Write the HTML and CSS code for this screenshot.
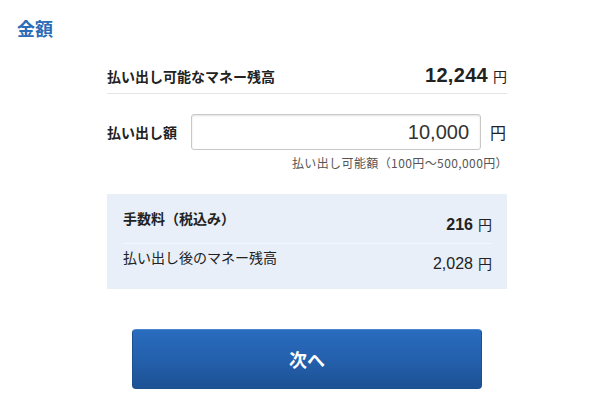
FILE: index.html
```html
<!DOCTYPE html>
<html lang="ja">
<head>
<meta charset="utf-8">
<link rel="stylesheet" href="styles.css">
</head>
<body>
<h2 class="title">金額</h2>
<div class="content">
  <div class="balance-row">
    <span class="label">払い出し可能なマネー残高</span>
    <span class="amount"><span class="num-big">12,244</span><span class="yen">円</span></span>
  </div>
  <div class="input-row">
    <label class="input-label">払い出し額</label>
    <input class="amount-input" type="text" value="10,000" readonly>
    <span class="input-yen">円</span>
  </div>
  <p class="hint">払い出し可能額（100円〜500,000円）</p>
  <div class="summary">
    <div class="sum-row fee">
      <span class="sum-label bold">手数料（税込み）</span>
      <span class="sum-value"><span class="num bold">216</span><span class="yen">円</span></span>
    </div>
    <div class="sum-row after">
      <span class="sum-label">払い出し後のマネー残高</span>
      <span class="sum-value"><span class="num">2,028</span><span class="yen">円</span></span>
    </div>
  </div>
  <button class="next-btn" type="button">次へ</button>
</div>
</body>
</html>
```
FILE: styles.css
```css
* { box-sizing: border-box; }
body {
  margin: 0;
  background: #fff;
  color: #222;
  font-family: "Liberation Sans", "Noto Sans CJK JP", sans-serif;
}
.title {
  margin: 0;
  padding: 15px 0 0 17px;
  font-size: 18px;
  line-height: 26px;
  font-weight: bold;
  color: #2a6cb8;
  font-family: "Noto Sans CJK JP", sans-serif;
}
.content {
  width: 400px;
  margin-left: 107px;
}
.balance-row {
  margin-top: 21px;
  display: flex;
  justify-content: space-between;
  align-items: baseline;
  padding-bottom: 5px;
  border-bottom: 1px solid #e4e4e4;
}
.label {
  font-family: "Noto Sans CJK JP", sans-serif;
  font-size: 14px;
  font-weight: bold;
  line-height: 20px;
}
.num-big {
  font-family: "Liberation Sans", sans-serif;
  font-size: 20px;
  font-weight: bold;
  line-height: 26px;
  letter-spacing: 0.3px;
}
.yen {
  font-family: "Noto Sans CJK JP", sans-serif;
  font-size: 14px;
  margin-left: 5px;
}
.input-row {
  margin-top: 20px;
  display: flex;
  align-items: center;
}
.input-label {
  width: 84px;
  font-family: "Noto Sans CJK JP", sans-serif;
  font-size: 14px;
  font-weight: bold;
  line-height: 20px;
}
.amount-input {
  width: 290px;
  height: 36px;
  border: 1px solid #c9c9c9;
  border-radius: 3px;
  box-shadow: inset 0 1px 2px rgba(0,0,0,0.12);
  text-align: right;
  padding: 0 11px 0 0;
  font-family: "Liberation Sans", sans-serif;
  font-size: 20px;
  color: #333;
  background: #fff;
  outline: none;
}
.input-yen {
  margin-left: 9px;
  font-family: "Noto Sans CJK JP", sans-serif;
  font-size: 16px;
  line-height: 20px;
}
.hint {
  margin: 5px -1px 0 0;
  text-align: right;
  font-family: "Noto Sans CJK JP", sans-serif;
  font-size: 12px;
  line-height: 16px;
  letter-spacing: 0.4px;
  color: #555;
}
.summary {
  margin-top: 23px;
  background: #e8eff8;
  padding: 0 15px 15px 16px;
}
.sum-row {
  display: flex;
  justify-content: space-between;
}
.sum-row.fee {
  padding-top: 14px;
  padding-bottom: 8px;
  border-bottom: 1px solid #f3f6fa;
}
.sum-row.after {
  padding-top: 3px;
}
.sum-label {
  align-self: flex-start;
  font-family: "Noto Sans CJK JP", sans-serif;
  font-size: 14px;
  line-height: 20px;
}
.sum-value {
  align-self: flex-end;
  line-height: 20px;
  margin-top: 6px;
}
.bold { font-weight: bold; }
.num {
  font-family: "Liberation Sans", sans-serif;
  font-size: 16px;
}
.next-btn {
  display: block;
  width: 350px;
  height: 60px;
  margin: 40px 0 0 25px;
  border: 1px solid #1d4f8e;
  border-top-color: #4a86cf;
  border-radius: 4px;
  background: linear-gradient(to bottom, #2a6cbf 0%, #2460ad 50%, #1d5293 100%);
  color: #fff;
  font-family: "Noto Sans CJK JP", sans-serif;
  font-size: 18px;
  font-weight: bold;
  cursor: pointer;
}
```
